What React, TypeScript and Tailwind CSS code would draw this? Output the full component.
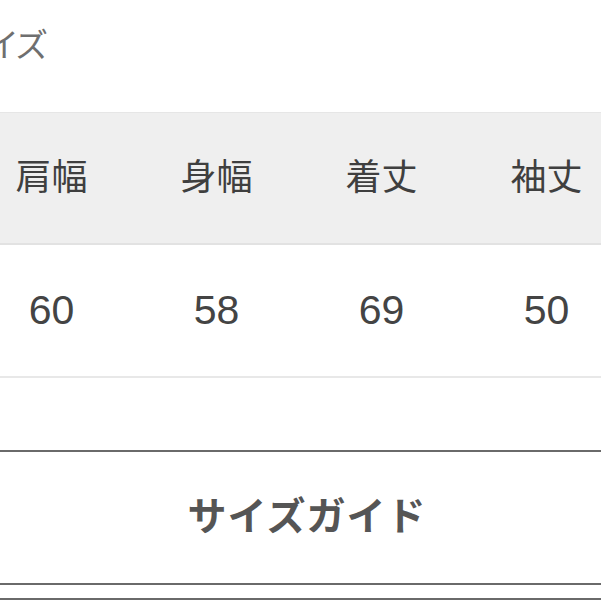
export default function App() {
  const heads = ['肩幅', '身幅', '着丈', '袖丈'];
  const values = ['60', '58', '69', '50'];

  return (
    <div
      className="w-[601px] h-[601px] overflow-hidden bg-white text-[#444]"
      style={{ fontFamily: '"Liberation Sans", "Noto Sans CJK JP", sans-serif' }}
    >
      {/* Title */}
      <div className="h-[112px] pt-[26px]">
        <h2 className="-ml-[44px] text-[33px] leading-[40px] text-[#6f6f6f] tracking-[-3px]">サイズ</h2>
      </div>

      {/* Size table */}
      <div className="-ml-[31px] w-[660px]">
        <div className="grid grid-cols-4 h-[133px] items-center bg-[#efefef] border-t border-[#e6e6e6] border-b-2 border-b-[#e2e2e2]">
          {heads.map((h) => (
            <div key={h} className="text-center text-[36px] leading-none text-[#3f3f3f]">
              {h}
            </div>
          ))}
        </div>
        <div className="grid grid-cols-4 h-[133px] items-center border-b-2 border-[#e8e8e8]">
          {values.map((v, i) => (
            <div key={i} className="text-center text-[41px] leading-none text-[#444]">
              {v}
            </div>
          ))}
        </div>
      </div>

      {/* Size guide button */}
      <button className="mt-[72px] -ml-[31px] w-[676px] h-[135px] flex items-center justify-center border-y-2 border-[#6a6a6a] bg-white">
        <span className="text-[39px] font-bold text-[#555] tracking-[1px]">サイズガイド</span>
      </button>

      <div className="mt-[13px] border-t-2 border-[#6a6a6a]" />
    </div>
  );
}
